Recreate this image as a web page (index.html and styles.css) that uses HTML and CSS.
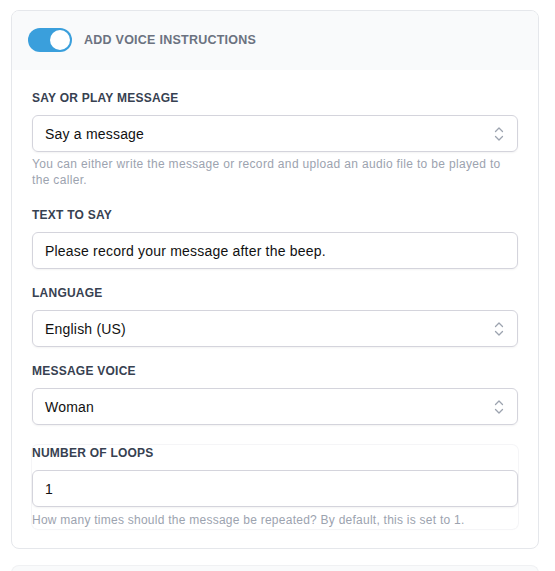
FILE: index.html
```html
<!DOCTYPE html>
<html lang="en">
<head>
<meta charset="utf-8">
<title>Voice instructions</title>
<link rel="stylesheet" href="styles.css">
</head>
<body>
<div class="card">
  <div class="card-header">
    <span class="toggle"><span class="knob"></span></span>
    <span class="header-title">ADD VOICE INSTRUCTIONS</span>
  </div>
  <div class="card-body">
    <div class="field">
      <div class="label">SAY OR PLAY MESSAGE</div>
      <div class="control select">
        <span>Say a message</span>
        <svg class="chev" width="10" height="16" viewBox="0 0 10 16" fill="none" stroke="#9ca3af" stroke-width="1.3" stroke-linecap="round" stroke-linejoin="round"><path d="M1.5 5.5 L5 2 L8.5 5.5"/><path d="M1.5 10.5 L5 14 L8.5 10.5"/></svg>
      </div>
      <div class="help">You can either write the message or record and upload an audio file to be played to the caller.</div>
    </div>
    <div class="field">
      <div class="label">TEXT TO SAY</div>
      <div class="control"><span>Please record your message after the beep.</span></div>
    </div>
    <div class="field">
      <div class="label">LANGUAGE</div>
      <div class="control select">
        <span>English (US)</span>
        <svg class="chev" width="10" height="16" viewBox="0 0 10 16" fill="none" stroke="#9ca3af" stroke-width="1.3" stroke-linecap="round" stroke-linejoin="round"><path d="M1.5 5.5 L5 2 L8.5 5.5"/><path d="M1.5 10.5 L5 14 L8.5 10.5"/></svg>
      </div>
    </div>
    <div class="field">
      <div class="label">MESSAGE VOICE</div>
      <div class="control select">
        <span>Woman</span>
        <svg class="chev" width="10" height="16" viewBox="0 0 10 16" fill="none" stroke="#9ca3af" stroke-width="1.3" stroke-linecap="round" stroke-linejoin="round"><path d="M1.5 5.5 L5 2 L8.5 5.5"/><path d="M1.5 10.5 L5 14 L8.5 10.5"/></svg>
      </div>
    </div>
    <div class="field field-boxed">
      <div class="label">NUMBER OF LOOPS</div>
      <div class="control"><span>1</span></div>
      <div class="help help-last">How many times should the message be repeated? By default, this is set to 1.</div>
    </div>
  </div>
</div>
<div class="card-next"></div>
</body>
</html>
```
FILE: styles.css
```css
* { box-sizing: border-box; }
body {
  margin: 0;
  background: #ffffff;
  font-family: "Liberation Sans", Arial, sans-serif;
  padding: 10px 16px 0 11px;
}
.card {
  border: 1px solid #e5e7eb;
  border-radius: 8px;
  background: #fff;
  overflow: hidden;
}
.card-header {
  height: 59px;
  background: #f9fafb;
  display: flex;
  align-items: center;
  padding: 0 16px 2px 16px;
  gap: 12px;
}
.toggle {
  width: 44px;
  height: 24px;
  border-radius: 12px;
  background: #3a9fdc;
  display: flex;
  align-items: center;
  justify-content: flex-end;
  padding: 2px;
}
.knob {
  width: 20px;
  height: 20px;
  border-radius: 50%;
  background: #fff;
}
.header-title {
  font-size: 12.5px;
  font-weight: 700;
  color: #6b7280;
  letter-spacing: 0.02em;
}
.card-body {
  padding: 20px 20px 19px 20px;
  display: flex;
  flex-direction: column;
  gap: 16px;
}
.label {
  font-size: 12px;
  line-height: 16px;
  font-weight: 700;
  color: #374151;
  letter-spacing: 0.02em;
  margin-bottom: 9px;
}
.control {
  height: 37px;
  border: 1px solid #d4d4dc;
  border-radius: 6px;
  box-shadow: 0 1px 2px rgba(0,0,0,0.05);
  display: flex;
  align-items: center;
  padding: 0 12px;
  font-size: 14px;
  letter-spacing: 0.2px;
  color: #111;
}
.select { justify-content: space-between; padding-right: 13px; }
.chev { display: block; }
.help {
  margin-top: 4px;
  margin-bottom: 3px;
  font-size: 12px;
  line-height: 16px;
  letter-spacing: 0.33px;
  color: #9ca3af;
}
.help-last { margin-top: 5px; margin-bottom: 1px; letter-spacing: 0.25px; }
.field-boxed {
  margin-top: 4px;
  border-radius: 6px;
  box-shadow: 0 0 0 1px #f5f5f7, 0 1px 2px rgba(0,0,0,0.02);
}
.card-next {
  margin-top: 16px;
  height: 20px;
  border: 1px solid #f0f1f3;
  border-bottom: none;
  border-radius: 8px 8px 0 0;
  background: #f9fafb;
}
```
